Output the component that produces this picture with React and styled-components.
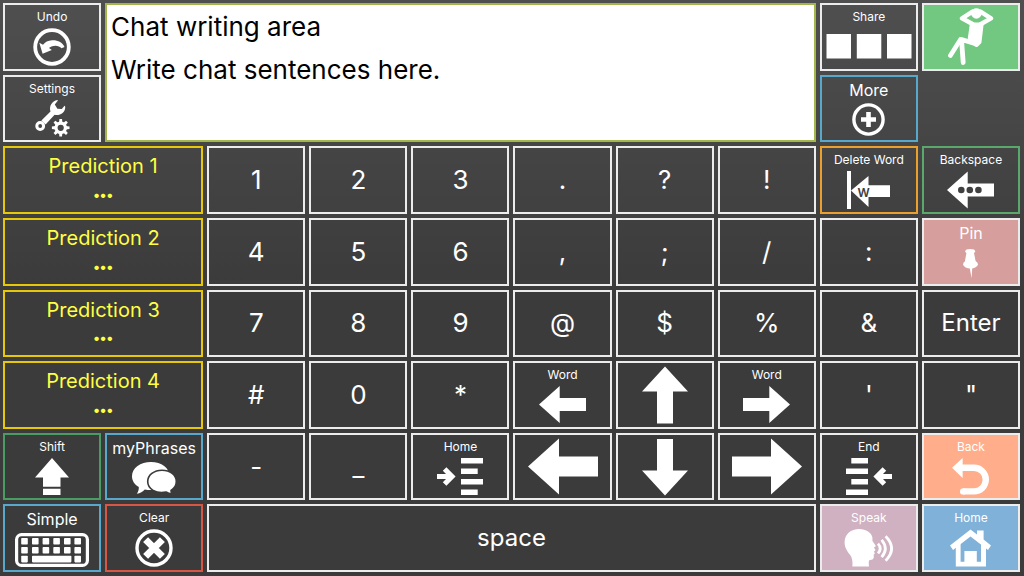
import React from 'react'
import styled, { createGlobalStyle } from 'styled-components';

/**
 * On-screen keyboard with a chat writing area, predictions and navigation keys
 */

const GlobalStyle = createGlobalStyle`
    * {
        box-sizing: border-box;
    }
    body {
        margin: 0;
        background: #3b3b3b;
        font-family: Inter, Roboto, "Liberation Sans", sans-serif;
    }
`

const Board = styled.main`
    display: grid;
    grid-template-columns: repeat(10, minmax(0, 1fr));
    grid-template-rows: repeat(8, minmax(0, 1fr));
    gap: 4px;
    min-height: 100vh;
    padding: 3px 4px 4px 3px;
    background: linear-gradient(#4f4f4f 0%, #3b3b3b 50%);
`

const ChatArea = styled.textarea`
    grid-column: span 7;
    grid-row: span 2;
    width: 100%;
    height: 100%;
    min-width: 0;
    margin: 0;
    padding: 0 4px;
    border: 2px solid #a3b64a;
    border-radius: 0;
    outline: none;
    resize: none;
    background: white;
    color: black;
    font-family: inherit;
    font-size: 26px;
    line-height: 43px;
`

const KeyButton = styled.button`
    grid-column: span ${({ $span }) => $span || 1};
    display: flex;
    flex-direction: column;
    align-items: center;
    justify-content: center;
    min-width: 0;
    margin: 0;
    padding: 0;
    border: 2px solid ${({ $border }) => $border || '#ececec'};
    border-radius: 0;
    background: ${({ $fill }) => $fill || 'transparent'};
    color: ${({ $color }) => $color || 'white'};
    font-family: inherit;
    font-size: 26px;
    line-height: 32px;
    cursor: pointer;
`

const WordText = styled.span`
    font-size: 24px;
`

const Label = styled.span`
    margin-top: ${({ $large }) => ($large ? '3px' : '4px')};
    font-size: ${({ $large }) => ($large ? '16px' : '12px')};
    line-height: ${({ $large }) => ($large ? '20px' : '16px')};
    white-space: nowrap;
`

const IconSlot = styled.span`
    flex: 1;
    display: flex;
    align-items: center;
    justify-content: center;
`

const Icon = styled.svg`
    display: block;
    fill: white;
    stroke: none;
    text {
        font-family: inherit;
        font-size: 12px;
        font-weight: 600;
    }
`

const Prediction = styled.span`
    margin-top: 4px;
    font-size: 20px;
    line-height: 28px;
    white-space: nowrap;
`

const Dots = styled.span`
    flex: 1;
    display: flex;
    align-items: center;
    padding-bottom: 2px;
    font-size: 14px;
    font-weight: 700;
    line-height: 16px;
`

const Spacer = styled.div``

const DARK = '#404040'
const BLUE = '#58a8cc'
const GREEN = '#4a9c62'

const icons = {
    undo: {
        size: [38, 38],
        art: (
            <>
                <circle cx="19" cy="19" r="16.8" fill="none" stroke="white" strokeWidth="3.8" />
                <path d="M6.3 14.8 L9.6 25.8 L18.8 22 L16 20 C20 16.6 26 17.2 28.5 20.2 L31.5 19 C30 14.5 24.5 12 19 12.3 C15 12.5 12 14.2 10 16.8 Z" />
            </>
        ),
    },
    settings: {
        size: [35, 38],
        art: (
            <>
                <circle cx="5.2" cy="27" r="3.4" fill="none" stroke="white" strokeWidth="3" />
                <path d="M6.4 21.6 L15.5 12.5 C13.8 7.5 16.8 1.8 22.5 1 L22.9 1.4 L19.8 5.6 L22.4 9.7 L26.8 9.9 L29.5 6.8 L30.2 7.4 C30.8 13 25 17 19.6 15.8 L10.6 25.4 Z" />
                <circle cx="25.7" cy="28.8" r="4.7" fill="none" stroke="white" strokeWidth="3.2" />
                {[0, 45, 90, 135, 180, 225, 270, 315].map((angle) => (
                    <path key={angle} d="M24 23.8 L24.4 20 H27 L27.4 23.8 Z" transform={`rotate(${angle} 25.7 28.8)`} />
                ))}
            </>
        ),
    },
    share: {
        size: [86, 25],
        art: <path d="M0.5 0 H25 V24.5 H0.5 Z M30.8 0 H55.3 V24.5 H30.8 Z M61 0 H85.5 V24.5 H61 Z" />,
    },
    relax: {
        size: [46, 58],
        art: (
            <g stroke="white" strokeLinecap="round" strokeLinejoin="round">
                <circle cx="28.4" cy="5.4" r="5" strokeWidth="0.5" />
                <path d="M24.5 3.6 L14 10.3 L24.5 16 M32.5 3.6 L43 10.3 L33 16" fill="none" strokeWidth="4.4" />
                <path d="M23.8 16.4 H33.6 L31.5 34 L28.5 37 L21.5 32.5 Z" strokeWidth="4" />
                <path d="M25 35 L13.5 31.5 L15.2 54.5" fill="none" strokeWidth="4.8" />
                <path d="M12.5 31.5 L2.4 47.5" fill="none" strokeWidth="4.6" />
            </g>
        ),
    },
    more: {
        size: [33, 33],
        art: (
            <>
                <circle cx="16.5" cy="16.5" r="14.6" fill="none" stroke="white" strokeWidth="3.4" />
                <path d="M14.2 9 H18.8 V14.2 H24 V18.8 H18.8 V24 H14.2 V18.8 H9 V14.2 H14.2 Z" />
            </>
        ),
    },
    deleteWord: {
        size: [43, 38],
        art: (
            <>
                <path d="M0 0 H4 V38 H0 Z M4 19.5 L21.5 5 V14.3 H43 V26 H21.5 V36 Z" />
                <text x="16.5" y="25.5" textAnchor="middle" fill={DARK}>W</text>
            </>
        ),
    },
    backspace: {
        size: [47, 38],
        art: (
            <>
                <path d="M0 19 L20.7 0.5 V12.5 H47 V25.5 H20.7 V37.5 Z" />
                <g fill={DARK}>
                    <circle cx="14.3" cy="19" r="3.3" />
                    <circle cx="22.8" cy="19" r="3.3" />
                    <circle cx="31.4" cy="19" r="3.3" />
                </g>
            </>
        ),
    },
    pin: {
        size: [15, 29],
        art: (
            <>
                <ellipse cx="7.2" cy="2.2" rx="4.9" ry="2.2" />
                <path d="M3.6 3 H10.8 L12.8 13 H1.8 Z" />
                <ellipse cx="7.5" cy="15.2" rx="7.4" ry="4.2" />
                <path d="M6.5 18 H9.3 L8.6 29 Z" />
            </>
        ),
    },
    wordLeft: {
        size: [47, 37],
        art: <path d="M0 18.5 L20.7 0 V12 H47 V25 H20.7 V37 Z" />,
    },
    wordRight: {
        size: [47, 37],
        art: <path d="M47 18.5 L26.3 0 V12 H0 V25 H26.3 V37 Z" />,
    },
    up: {
        size: [46, 58],
        art: <path d="M23 0.5 L46 25.5 H31 V57.5 H15 V25.5 H0 Z" />,
    },
    down: {
        size: [46, 58],
        art: <path d="M23 57.5 L0 32.5 H15 V1 H31 V32.5 H46 Z" />,
    },
    left: {
        size: [70, 57],
        art: <path d="M0 28.5 L31 0.5 V18.5 H70 V38.5 H31 V56.5 Z" />,
    },
    right: {
        size: [70, 57],
        art: <path d="M70 28.5 L39 0.5 V18.5 H0 V38.5 H39 V56.5 Z" />,
    },
    shift: {
        size: [34, 37],
        art: <path d="M17 0 L34 19.5 H25.5 V28.8 H8 V19.5 H0 Z M8 30.8 H25.5 V37 H8 Z" />,
    },
    phrases: {
        size: [45, 32],
        art: (
            <>
                <path d="M19 0 C8.5 0 0 6 0 14.2 C0 18.8 2.6 22.6 6.8 25 C7 27.5 6.3 29.6 4.8 31.8 C8.3 31.2 10.8 29.8 12.8 27.4 C25 30 37.5 24 37.5 14.2 C37.5 6 29.5 0 19 0 Z" />
                <path d="M30 8.2 C38.2 8.2 44.3 13 44.3 19.6 C44.3 23.4 42.4 26.5 39 28.5 C39 29.8 39.4 30.8 40.2 32 C37.5 31.8 35.5 31.1 34 30 C24 32 15.7 27 15.7 19.6 C15.7 13 22 8.2 30 8.2 Z" stroke="#3b3b3b" strokeWidth="1.6" />
            </>
        ),
    },
    keyboard: {
        size: [74, 34],
        art: (
            <>
                <rect x="1.6" y="1.6" width="70.8" height="30.8" rx="5" fill="none" stroke="white" strokeWidth="3.2" />
                {[6.2, 17, 27.6, 38.3, 49, 59.4].map((x) => (
                    <React.Fragment key={x}>
                        <rect x={x} y="5" width="6.6" height="6.6" rx="0.8" />
                        <rect x={x} y="14" width="6.6" height="6.6" rx="0.8" />
                    </React.Fragment>
                ))}
                <rect x="6.2" y="22.8" width="6.6" height="6.6" rx="0.8" />
                <rect x="17" y="22.8" width="39.4" height="6.6" rx="0.8" />
                <rect x="59.4" y="22.8" width="6.6" height="6.6" rx="0.8" />
            </>
        ),
    },
    clear: {
        size: [38, 38],
        art: (
            <g fill="none" stroke="white">
                <circle cx="19" cy="19" r="17" strokeWidth="3.4" />
                <path d="M10.6 10.6 L27.4 27.4 M27.4 10.6 L10.6 27.4" strokeWidth="7" />
            </g>
        ),
    },
    end: {
        size: [46, 37],
        art: (
            <path d="M5.3 0 H22 V5.6 H5.3 Z M0 10.5 H22 V16 H0 Z M5.3 21 H22 V26.4 H5.3 Z M0 31.4 H22 V37 H0 Z M27.4 18.5 L36.6 9.3 L40.2 12.8 L37 16 H46 V21 H37 L40.2 24.2 L36.6 27.7 Z" />
        ),
    },
    lineHome: {
        size: [46, 37],
        art: (
            <path d="M24 0 H46 V5.6 H24 Z M24 10.6 H40.7 V16 H24 Z M24 21 H46 V26.5 H24 Z M24 31.4 H40.7 V37 H24 Z M18.6 18.5 L9.4 9.3 L5.8 12.8 L9 16 H0 V21 H9 L5.8 24.2 L9.4 27.7 Z" />
        ),
    },
    back: {
        size: [37, 37],
        art: (
            <>
                <path d="M0 9.8 L10.6 0 V20 Z" />
                <path d="M9 9.8 H22 A11.7 11.7 0 0 1 22 33.4 H11.2" fill="none" stroke="white" strokeWidth="6.4" />
                <circle cx="11.2" cy="33.4" r="3.2" />
            </>
        ),
    },
    speak: {
        size: [50, 38],
        art: (
            <>
                <path d="M8.4 37.6 C8.8 33 8.4 29 6 25.8 C3 22 0.6 18.4 0.6 13.2 C0.6 5 7 0 15.2 0 C22.2 0 27.4 3.6 28.4 8.4 C28.7 10 28 11.2 28.8 12.6 L31.6 16.6 C32 17.8 30.8 18.2 29.8 18.6 L31.6 21 L29.8 22.8 L31 24.2 L29.6 25.8 C30.4 29 29.2 31 26.4 31 C24.6 31 24.6 32.4 25 37.6 Z" />
                <g fill="none" stroke="white" strokeWidth="2.8">
                    <path d="M34 14.6 Q38.4 19.5 34 24.4" />
                    <path d="M37.6 10.8 Q45 19.5 37.6 28.2" />
                    <path d="M41.6 7.2 Q53.6 19.5 41.6 31.8" />
                </g>
            </>
        ),
    },
    house: {
        size: [41, 38],
        art: (
            <>
                <path d="M20.5 0.6 L27 5.6 V1.4 H33.6 V10.6 L41 16.4 L38 21 L20.5 7.4 L3 21 L0 16.4 Z" />
                <path d="M5.8 17.5 L10.6 14 V32.8 H14.4 V22 H26.8 V32.8 H31 V14 L36 17.5 V37.6 H5.8 Z" />
            </>
        ),
    },
}

const topKeys = [
    { label: 'Share', icon: 'share' },
    { name: 'Relax', icon: 'relax', fill: '#72c781' },
    { label: 'Settings', icon: 'settings' },
    { label: 'More', large: true, icon: 'more', border: BLUE },
]

const keys = [
    { prediction: 'Prediction 1' },
    { text: '1' }, { text: '2' }, { text: '3' }, { text: '.' }, { text: '?' }, { text: '!' },
    { label: 'Delete Word', icon: 'deleteWord', border: '#eb9f2d' },
    { label: 'Backspace', icon: 'backspace', border: '#5aa86c' },

    { prediction: 'Prediction 2' },
    { text: '4' }, { text: '5' }, { text: '6' }, { text: ',' }, { text: ';' }, { text: '/' }, { text: ':' },
    { label: 'Pin', large: true, icon: 'pin', fill: '#d69f9d' },

    { prediction: 'Prediction 3' },
    { text: '7' }, { text: '8' }, { text: '9' }, { text: '@' }, { text: '$' }, { text: '%' }, { text: '&' },
    { text: 'Enter' },

    { prediction: 'Prediction 4' },
    { text: '#' }, { text: '0' }, { text: '*' },
    { label: 'Word', icon: 'wordLeft' },
    { name: 'Up', icon: 'up' },
    { label: 'Word', icon: 'wordRight' },
    { text: "'" }, { text: '"' },

    { label: 'Shift', icon: 'shift', border: GREEN },
    { label: 'myPhrases', large: true, icon: 'phrases', border: BLUE },
    { text: '-' }, { text: '_' },
    { label: 'Home', icon: 'lineHome' },
    { name: 'Left', icon: 'left' },
    { name: 'Down', icon: 'down' },
    { name: 'Right', icon: 'right' },
    { label: 'End', icon: 'end' },
    { label: 'Back', icon: 'back', fill: '#ffad8b' },

    { label: 'Simple', large: true, icon: 'keyboard', border: BLUE },
    { label: 'Clear', icon: 'clear', border: '#d65745' },
    { text: 'space', span: 6 },
    { label: 'Speak', icon: 'speak', fill: '#cfb1c1' },
    { label: 'Home', icon: 'house', fill: '#7fb1d9' },
]

const KeyIcon = ({ name }) => {
    const { size: [width, height], art } = icons[name]
    return (
        <Icon width={width} height={height} viewBox={`0 0 ${width} ${height}`} aria-hidden='true'>
            {art}
        </Icon>
    )
}

const Key = ({ text, label, large, name, icon, prediction, border, fill, span }) => {
    if (prediction) {
        return (
            <KeyButton type='button' $span={2} $border='#e6c80a' $color='#ffff42'>
                <Prediction>{prediction}</Prediction>
                <Dots>•••</Dots>
            </KeyButton>
        )
    }
    return (
        <KeyButton type='button' aria-label={name} $span={span} $border={border} $fill={fill}>
            {text && (text.length > 1 ? <WordText>{text}</WordText> : text)}
            {label && <Label $large={large}>{label}</Label>}
            {icon && <IconSlot><KeyIcon name={icon} /></IconSlot>}
        </KeyButton>
    )
}

const App = () => {
    return (
        <>
            <GlobalStyle />
            <Board>
                <Key label='Undo' icon='undo' />
                <ChatArea
                    aria-label='Chat'
                    spellCheck={false}
                    defaultValue={'Chat writing area\nWrite chat sentences here.'}
                />
                {topKeys.map((item) => (
                    <Key key={item.icon} {...item} />
                ))}
                <Spacer />
                {keys.map((item, index) => (
                    <Key key={index} {...item} />
                ))}
            </Board>
        </>
    )
}

export default App
